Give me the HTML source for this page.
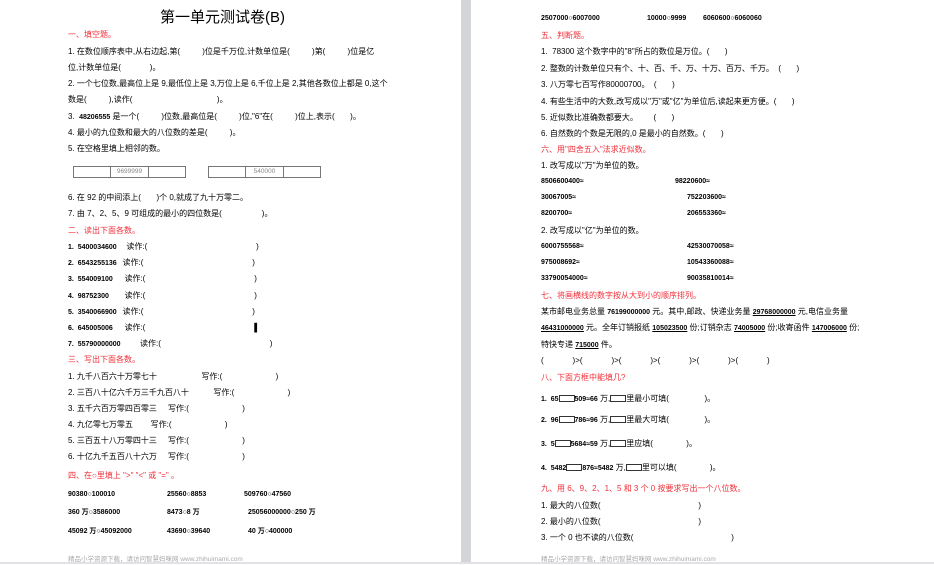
<!DOCTYPE html>
<html><head><meta charset="utf-8"><style>
body{margin:0;width:934px;height:564px;background:#fff;position:relative;overflow:hidden;font-family:"Liberation Sans","Noto Sans CJK SC",sans-serif;color:#000;}
.l{position:absolute;font-size:8px;line-height:10px;white-space:pre;transform:translateY(-5px);}
.r{color:#f0303a;}
.s{font-size:7px;font-weight:bold;}
.ft{color:#aaa;font-size:6.5px;}
u{text-decoration:underline;}
.bx{position:absolute;border:1px solid #777;height:10px;display:flex;}
.bx div{flex:1;border-right:1px solid #777;font-size:6.5px;color:#888;text-align:center;line-height:10px}
.bx div:last-child{border:none}
.sq{display:inline-block;width:14px;height:5px;border:1px solid #333;vertical-align:-1px}
</style></head><body>
<div style="position:absolute;left:461px;top:0;width:10px;height:564px;background:#d4d5d9"></div>
<div style="position:absolute;left:0;top:562px;width:934px;height:2px;background:#e2e2e6"></div>
<div class="l" style="left:160px;top:18px;font-size:15px;line-height:18px;transform:translateY(-9px)">第一单元测试卷(B)</div>
<div class="l r" style="left:68px;top:35px">一、填空题。</div>
<div class="l" style="left:68px;top:52px">1. 在数位顺序表中,从右边起,第(          )位是千万位,计数单位是(          )第(          )位是亿</div>
<div class="l" style="left:68px;top:68px">位,计数单位是(             )。</div>
<div class="l" style="left:68px;top:84px">2. 一个七位数,最高位上是 9,最低位上是 3,万位上是 6,千位上是 2,其他各数位上都是 0,这个</div>
<div class="l" style="left:68px;top:100px">数是(          ),读作(                                      )。</div>
<div class="l" style="left:68px;top:117px">3.  <span class="s">48206555</span> 是一个(          )位数,最高位是(          )位,"6"在(          )位上,表示(       )。</div>
<div class="l" style="left:68px;top:133px">4. 最小的九位数和最大的八位数的差是(          )。</div>
<div class="l" style="left:68px;top:149px">5. 在空格里填上相邻的数。</div>
<div class="bx" style="left:73px;top:166px;width:111px"><div></div><div>9699999</div><div></div></div>
<div class="bx" style="left:208px;top:166px;width:111px"><div></div><div>540000</div><div></div></div>
<div class="l" style="left:68px;top:198px">6. 在 92 的中间添上(       )个 0,就成了九十万零二。</div>
<div class="l" style="left:68px;top:214px">7. 由 7、2、5、9 可组成的最小的四位数是(                  )。</div>
<div class="l r" style="left:68px;top:231px">二、读出下面各数。</div>
<div class="l" style="left:68px;top:247px"><span class="s">1.  5400034600     </span>读作:(                                                 )</div>
<div class="l" style="left:68px;top:263px"><span class="s">2.  6543255136   </span>读作:(                                                 )</div>
<div class="l" style="left:68px;top:279px"><span class="s">3.  554009100      </span>读作:(                                                 )</div>
<div class="l" style="left:68px;top:296px"><span class="s">4.  98752300        </span>读作:(                                                 )</div>
<div class="l" style="left:68px;top:312px"><span class="s">5.  3540066900   </span>读作:(                                                 )</div>
<div class="l" style="left:68px;top:328px"><span class="s">6.  645005006      </span>读作:(                                                 <b>▌</b></div>
<div class="l" style="left:68px;top:344px"><span class="s">7.  55790000000          </span>读作:(                                                 )</div>
<div class="l r" style="left:68px;top:360px">三、写出下面各数。</div>
<div class="l" style="left:68px;top:377px">1. 九千八百六十万零七十                    写作:(                        )</div>
<div class="l" style="left:68px;top:393px">2. 三百八十亿六千万三千九百八十           写作:(                        )</div>
<div class="l" style="left:68px;top:409px">3. 五千六百万零四百零三     写作:(                        )</div>
<div class="l" style="left:68px;top:425px">4. 九亿零七万零五        写作:(                        )</div>
<div class="l" style="left:68px;top:441px">5. 三百五十八万零四十三     写作:(                        )</div>
<div class="l" style="left:68px;top:457px">6. 十亿九千五百八十六万     写作:(                        )</div>
<div class="l r" style="left:68px;top:476px">四、在○里填上 "&gt;" "&lt;" 或 "=" 。</div>
<div class="l s" style="left:68px;top:495px">90380○100010</div><div class="l s" style="left:167px;top:495px">25560○8853</div><div class="l s" style="left:244px;top:495px">509760○47560</div>
<div class="l s" style="left:68px;top:513px">360 万○3586000</div><div class="l s" style="left:167px;top:513px">8473○8 万</div><div class="l s" style="left:248px;top:513px">25056000000○250 万</div>
<div class="l s" style="left:68px;top:532px">45092 万○45092000</div><div class="l s" style="left:167px;top:532px">43690○39640</div><div class="l s" style="left:248px;top:532px">40 万○400000</div>
<div class="l ft" style="left:68px;top:560px">精品小学资源下载，请访问智慧妈咪网 www.zhihuimami.com</div>

<div class="l s" style="left:541px;top:19px">2507000○6007000</div><div class="l s" style="left:647px;top:19px">10000○9999</div><div class="l s" style="left:703px;top:19px">6060600○6060060</div>
<div class="l r" style="left:541px;top:36px">五、判断题。</div>
<div class="l" style="left:541px;top:52px">1.  78300 这个数字中的"8"所占的数位是万位。(       )</div>
<div class="l" style="left:541px;top:69px">2. 整数的计数单位只有个、十、百、千、万、十万、百万、千万。  (       )</div>
<div class="l" style="left:541px;top:85px">3. 八万零七百写作80000700。  (       )</div>
<div class="l" style="left:541px;top:102px">4. 有些生活中的大数,改写成以"万"或"亿"为单位后,读起来更方便。(       )</div>
<div class="l" style="left:541px;top:118px">5. 近似数比准确数都要大。       (       )</div>
<div class="l" style="left:541px;top:134px">6. 自然数的个数是无限的,0 是最小的自然数。(       )</div>
<div class="l r" style="left:541px;top:150px">六、用"四舍五入"法求近似数。</div>
<div class="l" style="left:541px;top:166px">1. 改写成以"万"为单位的数。</div>
<div class="l s" style="left:541px;top:182px">8506600400≈</div><div class="l s" style="left:675px;top:182px">98220600≈</div>
<div class="l s" style="left:541px;top:198px">30067005≈</div><div class="l s" style="left:687px;top:198px">752203600≈</div>
<div class="l s" style="left:541px;top:214px">8200700≈</div><div class="l s" style="left:687px;top:214px">206553360≈</div>
<div class="l" style="left:541px;top:231px">2. 改写成以"亿"为单位的数。</div>
<div class="l s" style="left:541px;top:247px">6000755568≈</div><div class="l s" style="left:687px;top:247px">42530070058≈</div>
<div class="l s" style="left:541px;top:263px">975008692≈</div><div class="l s" style="left:687px;top:263px">10543360088≈</div>
<div class="l s" style="left:541px;top:279px">33790054000≈</div><div class="l s" style="left:687px;top:279px">90035810014≈</div>
<div class="l r" style="left:541px;top:296px">七、将画横线的数字按从大到小的顺序排列。</div>
<div class="l" style="left:541px;top:312px">某市邮电业务总量 <span class="s">76199000000</span> 元。其中,邮政、快递业务量 <u class="s">29768000000</u> 元,电信业务量</div>
<div class="l" style="left:541px;top:328px"><u class="s">46431000000</u> 元。全年订销报纸 <u class="s">105023500</u> 份;订销杂志 <u class="s">74005000</u> 份;收寄函件 <u class="s">147006000</u> 份;</div>
<div class="l" style="left:541px;top:345px">特快专递 <u class="s">715000</u> 件。</div>
<div class="l" style="left:541px;top:361px">(             )&gt;(             )&gt;(             )&gt;(             )&gt;(             )&gt;(             )</div>
<div class="l r" style="left:541px;top:378px">八、下面方框中能填几?</div>
<div class="l" style="left:541px;top:399px"><span class="s">1.  65<span class="sq"></span>509≈66</span> 万,<span class="sq"></span>里最小可填(                )。</div>
<div class="l" style="left:541px;top:420px"><span class="s">2.  96<span class="sq"></span>786≈96</span> 万,<span class="sq"></span>里最大可填(                )。</div>
<div class="l" style="left:541px;top:444px"><span class="s">3.  5<span class="sq"></span>5684≈59</span> 万,<span class="sq"></span>里应填(               )。</div>
<div class="l" style="left:541px;top:468px"><span class="s">4.  5482<span class="sq"></span>876≈5482</span> 万,<span class="sq"></span>里可以填(               )。</div>
<div class="l r" style="left:541px;top:489px">九、用 6、9、2、1、5 和 3 个 0 按要求写出一个八位数。</div>
<div class="l" style="left:541px;top:506px">1. 最大的八位数(                                            )</div>
<div class="l" style="left:541px;top:522px">2. 最小的八位数(                                            )</div>
<div class="l" style="left:541px;top:538px">3. 一个 0 也不读的八位数(                                            )</div>
<div class="l ft" style="left:541px;top:560px">精品小学资源下载，请访问智慧妈咪网 www.zhihuimami.com</div>
</body></html>
